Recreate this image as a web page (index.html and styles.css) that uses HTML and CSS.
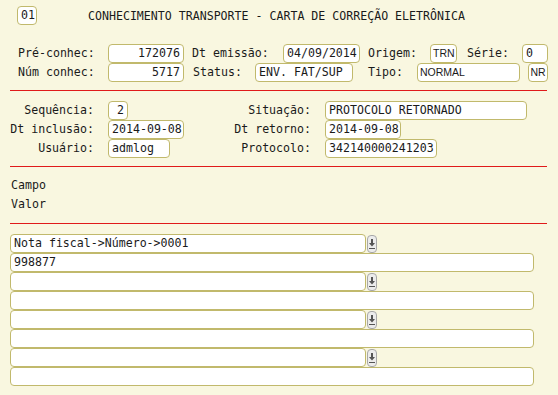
FILE: index.html
```html
<!DOCTYPE html>
<html lang="pt-BR">
<head>
    <meta charset="UTF-8">
    <title>Carta de Correção Eletrônica</title>
    <link rel="stylesheet" href="styles.css">
</head>
<body>
    <div class="screen">
        <div class="header">
            <div class="box w-code">01</div>
            <div class="title">CONHECIMENTO TRANSPORTE - CARTA DE CORREÇÃO ELETRÔNICA</div>
        </div>

        <div class="doc">
            <div class="doc-row">
                <span class="label l-pre">Pré-conhec:</span>
                <div class="box num w-76">172076</div>
                <span class="label l-emis">Dt emissão:</span>
                <div class="box w-77">04/09/2014</div>
                <span class="label l-orig">Origem:</span>
                <div class="box sans w-27">TRN</div>
                <span class="label l-serie">Série:</span>
                <div class="box w-26">0</div>
            </div>
            <div class="doc-row">
                <span class="label l-pre">Núm conhec:</span>
                <div class="box num w-76">5717</div>
                <span class="label l-status">Status:</span>
                <div class="box w-98">ENV. FAT/SUP</div>
                <span class="label l-tipo">Tipo:</span>
                <div class="box sans w-103">NORMAL</div>
                <div class="box sans w-20 nr">NR</div>
            </div>
        </div>

        <div class="rule"></div>

        <div class="status-grid">
            <span class="label right">Sequência:</span>
            <div><div class="box num w-20">2</div></div>
            <span class="label right">Situação:</span>
            <div><div class="box w-202">PROTOCOLO RETORNADO</div></div>

            <span class="label right">Dt inclusão:</span>
            <div><div class="box w-76">2014-09-08</div></div>
            <span class="label right">Dt retorno:</span>
            <div><div class="box w-76">2014-09-08</div></div>

            <span class="label right">Usuário:</span>
            <div><div class="box w-62">admlog</div></div>
            <span class="label right">Protocolo:</span>
            <div><div class="box w-111">342140000241203</div></div>
        </div>

        <div class="rule rule-low"></div>

        <div class="captions">
            <div class="caption">Campo</div>
            <div class="caption">Valor</div>
        </div>

        <div class="rule"></div>

        <div class="fields">
            <div class="field-row">
                <div class="box w-field">Nota fiscal-&gt;Número-&gt;0001</div>
                <div class="pick"><svg width="8" height="12" viewBox="0 0 8 12"><path d="M3 1h2v4h2l-3 3.5L1 5h2z" fill="#555"/><rect x="1" y="10" width="6" height="1" fill="#555"/></svg></div>
            </div>
            <div class="box w-value">998877</div>

            <div class="field-row">
                <div class="box w-field"></div>
                <div class="pick"><svg width="8" height="12" viewBox="0 0 8 12"><path d="M3 1h2v4h2l-3 3.5L1 5h2z" fill="#555"/><rect x="1" y="10" width="6" height="1" fill="#555"/></svg></div>
            </div>
            <div class="box w-value"></div>

            <div class="field-row">
                <div class="box w-field"></div>
                <div class="pick"><svg width="8" height="12" viewBox="0 0 8 12"><path d="M3 1h2v4h2l-3 3.5L1 5h2z" fill="#555"/><rect x="1" y="10" width="6" height="1" fill="#555"/></svg></div>
            </div>
            <div class="box w-value"></div>

            <div class="field-row">
                <div class="box w-field"></div>
                <div class="pick"><svg width="8" height="12" viewBox="0 0 8 12"><path d="M3 1h2v4h2l-3 3.5L1 5h2z" fill="#555"/><rect x="1" y="10" width="6" height="1" fill="#555"/></svg></div>
            </div>
            <div class="box w-value"></div>
        </div>
    </div>
</body>
</html>
```

FILE: styles.css
```css
* {
    margin: 0;
    padding: 0;
    box-sizing: border-box;
}

body {
    background: #f9f7e0;
    font-family: 'DejaVu Sans Mono', monospace;
    font-size: 11.6px;
    color: #1a1a1a;
}

.screen {
    width: 558px;
    height: 395px;
    padding-top: 6px;
}

.header {
    display: flex;
    align-items: center;
    padding-left: 17px;
}

.title {
    margin-left: 51px;
}

.box {
    height: 19px;
    line-height: 17px;
    background: #fff;
    border: 1px solid #c1b96c;
    border-radius: 4px;
    padding: 0 3px;
    white-space: nowrap;
    overflow: hidden;
}

.box.num {
    text-align: right;
}

.box.sans {
    font-family: 'Liberation Sans', Arial, sans-serif;
    font-size: 10.5px;
    padding: 0 2px;
}

.box.nr {
    margin-left: 8px;
    padding: 0;
    text-align: center;
}

.label {
    white-space: nowrap;
    line-height: 19px;
}

.w-code { width: 20px; }
.w-20 { width: 20px; }
.w-26 { width: 26px; }
.w-27 { width: 27px; }
.w-62 { width: 62px; }
.w-76 { width: 76px; }
.w-77 { width: 77px; }
.w-98 { width: 98px; }
.w-103 { width: 103px; }
.w-111 { width: 112px; }
.w-202 { width: 202px; }

/* documento */
.doc {
    padding: 19px 0 0 18px;
}

.doc-row {
    display: flex;
    align-items: center;
}

.l-pre { width: 90px; }
.l-emis { width: 91px; margin-left: 8px; }
.l-orig { width: 62px; margin-left: 8px; }
.l-serie { width: 55px; margin-left: 10px; }
.l-status { width: 62px; margin-left: 9px; }
.l-tipo { width: 49px; margin-left: 15px; }

.rule {
    height: 1px;
    background: #e01a1a;
    margin-left: 10px;
    width: 537px;
}

.doc + .rule {
    margin-top: 8px;
}

/* situacao */
.status-grid {
    display: grid;
    grid-template-columns: 94px 94px 95px auto;
    grid-auto-rows: 19px;
    column-gap: 14px;
    padding-top: 10px;
}

.label.right {
    text-align: right;
}

.rule-low {
    margin-top: 8px;
}

.captions {
    padding: 9px 0 0 11px;
}

.caption {
    line-height: 19px;
}

.captions + .rule {
    margin-top: 9px;
}

/* campos */
.fields {
    padding: 10px 0 0 10px;
}

.field-row {
    display: flex;
    align-items: center;
}

.w-field { width: 356px; }
.w-value { width: 524px; }

.pick {
    width: 10px;
    height: 18px;
    margin-left: 1px;
    border: 1px solid #a8a8a8;
    border-radius: 4px;
    background: #ececec;
    display: flex;
    align-items: center;
    justify-content: center;
}
```
